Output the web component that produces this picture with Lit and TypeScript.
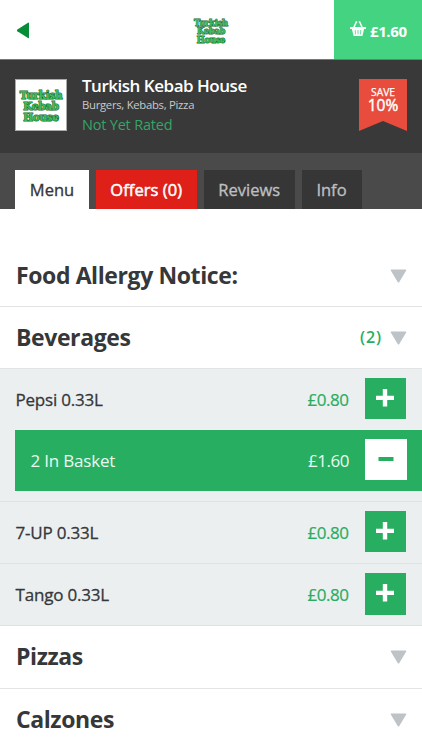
import { LitElement, html, css } from "lit";
import { customElement, property } from "lit/decorators.js";

const chevron = html`<svg class="chevron" width="17" height="14" viewBox="0 0 17 14">
  <path d="M1.400.6h14.200q1.200 0 .6 1L9.300 12.900q-.8 1.200-1.600 0L.8 1.600q-.6-1 .6-1z" fill="#bdc3c7" />
</svg>`;

@customElement("shop-logo")
class ShopLogo extends LitElement {
  static styles = css`
    :host {
      display: block;
      font: bold 10.500px/10.800px "DejaVu Serif", serif;
      text-align: center;
      color: #3fb95c;
      -webkit-text-stroke: 1.100px #0f6a28;
      paint-order: stroke fill;
      letter-spacing: -0.350px;
    }
  `;
  render() {
    return html`Turkish<br />Kebab<br />House`;
  }
}

@customElement("menu-item")
class MenuItem extends LitElement {
  @property() name = "";
  @property() price = "";
  @property({ type: Number }) count = 0;
  @property() total = "";

  static styles = css`
    :host {
      display: block;
      box-sizing: border-box;
      height: 62.200px;
      border-bottom: 1px solid #dfe2e3;
      background: #ebeff0;
      color: #363739;
      font-size: 17px;
    }
    :host([count]) {
      height: 133px;
    }
    .row,
    .basket {
      display: flex;
      align-items: center;
      height: 61px;
      box-sizing: border-box;
      padding: 0 16px 1.500px 15.500px;
    }
    .name {
      flex: 1;
      padding-top: 1px;
      letter-spacing: -0.200px;
      -webkit-text-stroke: 0.300px currentColor;
    }
    .price {
      padding-top: 1px;
      margin-right: 16px;
      color: #2aac60;
      letter-spacing: -0.450px;
      -webkit-text-stroke: 0.200px currentColor;
    }
    .button {
      display: grid;
      place-items: center;
      width: 41.500px;
      height: 41.500px;
      background: #27ae60;
    }
    .basket {
      margin-left: 15px;
      padding: 0 15.500px 2px;
      background: #27ae60;
      color: #eafaf0;
    }
    .basket .name,
    .basket .price {
      padding-top: 2px;
      color: #eafaf0;
      -webkit-text-stroke: 0;
    }
    .basket .button {
      background: #fff;
    }
    svg {
      margin-bottom: 1px;
    }
  `;
  render() {
    return html`<div class="row">
        <span class="name">${this.name}</span><span class="price">${this.price}</span>
        <span class="button"
          ><svg width="18" height="18" viewBox="0 0 18 18">
            <path d="M6.800 0h4.400v6.700H18v4.300h-6.800v6.500H6.800V11H0V6.700h6.800z" fill="#fff" /></svg
        ></span>
      </div>
      ${this.count
        ? html`<div class="basket">
            <span class="name">${this.count} In Basket</span><span class="price">${this.total}</span>
            <span class="button"
              ><svg width="16" height="6" viewBox="0 0 16 6"><path d="M.5 1h15v4H.5z" fill="#27ae60" /></svg
            ></span>
          </div>`
        : ""}`;
  }
}

@customElement("app-root")
class AppRoot extends LitElement {
  static styles = css`
    :host {
      display: block;
      height: 750px;
      overflow: hidden;
      background: #fff;
      font-family: "Open Sans", "Noto Sans", sans-serif;
      color: #363739;
      white-space: nowrap;
    }
    .top {
      display: grid;
      grid-template-columns: 88px 1fr 88px;
      border-bottom: 1px solid #777;
      box-sizing: border-box;
      height: 60px;
    }
    .back {
      margin: 22px 0 0 16px;
    }
    .top shop-logo {
      zoom: 0.800;
      margin-top: 23.500px;
    }
    .cart {
      display: flex;
      align-items: center;
      padding: 2px 0 0 16px;
      background: #44d481;
      color: #fff;
      font-size: 15px;
      font-weight: 700;
      letter-spacing: -0.400px;
    }
    .cart svg {
      margin: -4px 4px 0 0;
    }
    .shop {
      display: flex;
      box-sizing: border-box;
      height: 93px;
      padding: 19px 15px 0;
      background: #393939;
    }
    .thumb {
      box-sizing: border-box;
      width: 52px;
      height: 52px;
      padding-top: 10px;
      background: #fff;
      border: 1px solid #aaa;
    }
    .about {
      flex: 1;
      margin: -4px 0 0 15px;
    }
    .title {
      font-size: 17px;
      font-weight: 600;
      line-height: 22px;
      letter-spacing: -0.480px;
      color: #fff;
    }
    .kinds {
      font-size: 11.300px;
      line-height: 15px;
      margin-top: -0.500px;
      letter-spacing: -0.280px;
      color: #c9c9c9;
    }
    .rated {
      font-size: 14.500px;
      line-height: 20px;
      margin-top: 3px;
      letter-spacing: -0.200px;
      color: #34a566;
    }
    .ribbon {
      box-sizing: border-box;
      width: 48px;
      height: 52px;
      padding-top: 7px;
      background: #e74c3c;
      clip-path: polygon(0 0, 100% 0, 100% 100%, 50% 81%, 0 100%);
      color: #fff;
      text-align: center;
      font-size: 10.300px;
      line-height: 13px;
      -webkit-text-stroke: 0.250px #fff;
    }
    .ribbon b {
      display: block;
      font-size: 15.500px;
      line-height: 13px;
      font-weight: 400;
      -webkit-text-stroke: 0.450px #fff;
    }
    .tabs {
      display: flex;
      gap: 6.500px;
      box-sizing: border-box;
      height: 56px;
      padding: 17px 15px 0;
      background: #4a4a4a;
    }
    .tab {
      display: grid;
      place-items: center;
      background: #363636;
      color: #bdbfc1;
      font-size: 16.500px;
      -webkit-text-stroke: 0.350px currentColor;
    }
    .menu {
      width: 74px;
      background: #fff;
      color: #363739;
    }
    .offers {
      width: 101.500px;
      background: #de2018;
      color: #fff;
      letter-spacing: 0.050px;
      -webkit-text-stroke-width: 0.500px;
    }
    .reviews {
      width: 91.500px;
    }
    .info {
      width: 60px;
    }
    .list {
      padding-top: 35.600px;
    }
    .section {
      display: flex;
      align-items: center;
      box-sizing: border-box;
      height: 62.200px;
      padding: 0 15px 0 16px;
      border-bottom: 1px solid #e3e4e5;
    }
    .heading {
      flex: 1;
      padding-bottom: 1px;
      font-size: 23px;
      line-height: 30px;
      font-weight: 700;
      letter-spacing: -0.400px;
    }
    .count {
      margin: 0 8px 0 0;
      color: #27ae60;
      font-size: 16px;
      font-weight: 600;
      letter-spacing: 0.900px;
    }
    .chevron {
      margin-top: 1px;
    }
  `;

  private section(name: string, count = 0) {
    return html`<div class="section">
      <span class="heading">${name}</span>
      ${count ? html`<span class="count">(${count})</span>` : ""}${chevron}
    </div>`;
  }

  render() {
    return html`
      <div class="top">
        <svg class="back" width="14" height="17" viewBox="0 0 14 17">
          <path d="M12 .7q1-.4 1 .6v14.200q0 1-1 .5L1.400 9.200q-1.200-.8 0-1.600z" fill="#078d38" />
        </svg>
        <shop-logo></shop-logo>
        <div class="cart">
          <svg width="16" height="16" viewBox="0 0 16 16" fill="none" stroke="#fff">
            <path d="M3.600 7 6.300.9h.9M12.400 7 9.700.9h-.9" stroke-width="1.500" />
            <path d="M.8 7h14.400" stroke-width="2" stroke-linecap="round" />
            <path d="M1.800 7.500 3.600 15h8.800l1.800-7.500z" fill="#fff" stroke="none" />
            <path d="M5.200 9l.3 4.300M8 9v4.300M10.800 9l-.3 4.300" stroke="#44d481" stroke-width=".8" />
          </svg>
          <span>£1.60</span>
        </div>
      </div>
      <div class="shop">
        <div class="thumb"><shop-logo></shop-logo></div>
        <div class="about">
          <div class="title">Turkish Kebab House</div>
          <div class="kinds">Burgers, Kebabs, Pizza</div>
          <div class="rated">Not Yet Rated</div>
        </div>
        <div class="ribbon">SAVE<b>10%</b></div>
      </div>
      <div class="tabs">
        <div class="tab menu">Menu</div>
        <div class="tab offers">Offers (0)</div>
        <div class="tab reviews">Reviews</div>
        <div class="tab info">Info</div>
      </div>
      <div class="list">
        ${this.section("Food Allergy Notice:")} ${this.section("Beverages", 2)}
        <menu-item name="Pepsi 0.33L" price="£0.80" count="2" total="£1.60"></menu-item>
        <menu-item name="7-UP 0.33L" price="£0.80"></menu-item>
        <menu-item name="Tango 0.33L" price="£0.80"></menu-item>
        ${this.section("Pizzas")} ${this.section("Calzones")}
      </div>
    `;
  }
}
